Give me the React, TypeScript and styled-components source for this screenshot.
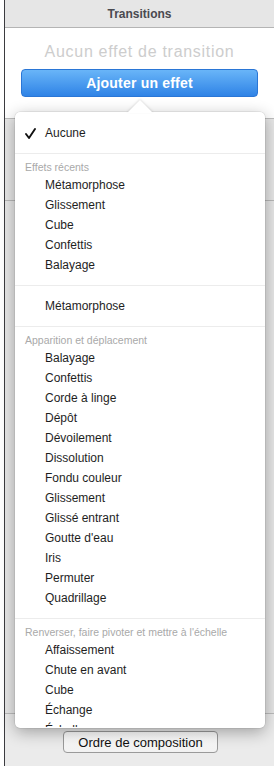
import React from "react";
import styled, { createGlobalStyle } from "styled-components";

type Section = {
  title?: string;
  items: string[];
};

// Menu content below the "Aucune" entry
const sections: Section[] = [
  {
    title: "Effets récents",
    items: ["Métamorphose", "Glissement", "Cube", "Confettis", "Balayage"],
  },
  { items: ["Métamorphose"] },
  {
    title: "Apparition et déplacement",
    items: [
      "Balayage",
      "Confettis",
      "Corde à linge",
      "Dépôt",
      "Dévoilement",
      "Dissolution",
      "Fondu couleur",
      "Glissement",
      "Glissé entrant",
      "Goutte d'eau",
      "Iris",
      "Permuter",
      "Quadrillage",
    ],
  },
  {
    title: "Renverser, faire pivoter et mettre à l'échelle",
    items: ["Affaissement", "Chute en avant", "Cube", "Échange", "Échelle"],
  },
];

const App: React.FC = () => {
  return (
    <>
      <GlobalStyle />
      <Page>
        <Gutter />
        <Panel>
          <Header>Transitions</Header>
          <Body>
            <Placeholder>Aucun effet de transition</Placeholder>
            <AddButton>Ajouter un effet</AddButton>
          </Body>
          <Middle>
            <MiddleRow />
          </Middle>
          <Footer>
            <OrderButton>Ordre de composition</OrderButton>
          </Footer>
        </Panel>

        <Popover>
          <Arrow width="26" height="13" viewBox="0 0 26 13">
            <path d="M0 13 L13 0 L26 13 Z" fill="#ffffff" />
          </Arrow>
          <MenuScroll>
            <MenuItem>
              <CheckSlot>
                <svg width="11" height="11" viewBox="0 0 11 11">
                  <path
                    d="M1 6 L4 10 L10 1"
                    fill="none"
                    stroke="#111"
                    strokeWidth="1.9"
                    strokeLinecap="round"
                    strokeLinejoin="round"
                  />
                </svg>
              </CheckSlot>
              Aucune
            </MenuItem>
            {sections.map((section, i) => (
              <React.Fragment key={i}>
                <Separator $plain={!section.title} />
                {section.title && <SectionTitle>{section.title}</SectionTitle>}
                {section.items.map((item, j) => (
                  <MenuItem key={j}>
                    <CheckSlot />
                    {item}
                  </MenuItem>
                ))}
              </React.Fragment>
            ))}
          </MenuScroll>
        </Popover>
      </Page>
    </>
  );
};

const GlobalStyle = createGlobalStyle`
  html, body {
    margin: 0;
    padding: 0;
    background: #ffffff;
  }
  body {
    font-family: "Liberation Sans", Arial, sans-serif;
  }
`;

const Page = styled.div`
  position: relative;
  display: flex;
  width: 274px;
  height: 766px;
  overflow: hidden;
`;

const Gutter = styled.div`
  width: 4px;
  background: #ffffff;
`;

const Panel = styled.div`
  flex: 1;
  display: flex;
  flex-direction: column;
  border-left: 1px solid #3b3b3f;
`;

const Header = styled.div`
  height: 27px;
  display: flex;
  align-items: center;
  justify-content: center;
  background: #e6e6e6;
  border-bottom: 1px solid #b4b4b4;
  font-size: 12px;
  font-weight: bold;
  color: #4a4a50;
`;

const Body = styled.div`
  height: 90px;
  display: flex;
  flex-direction: column;
  align-items: center;
  padding-top: 14px;
  box-sizing: border-box;
  background: #ffffff;
`;

const Placeholder = styled.div`
  height: 20px;
  line-height: 20px;
  font-size: 16px;
  letter-spacing: 0.7px;
  color: #cdcdcd;
`;

const AddButton = styled.button`
  margin-top: 7px;
  width: 237px;
  height: 28px;
  border: 1px solid #2a76d6;
  border-radius: 4px;
  background: linear-gradient(#69b5f8, #2f83e6);
  color: #ffffff;
  font-family: "Liberation Sans", Arial, sans-serif;
  font-size: 14px;
  font-weight: bold;
  letter-spacing: 0.2px;
  padding: 0;
`;

const Middle = styled.div`
  flex: 1;
  background: #e6e6e6;
  border-top: 1px solid #bdbdbd;
`;

const MiddleRow = styled.div`
  height: 81px;
  border-bottom: 1px solid #b8b8b8;
`;

const Footer = styled.div`
  height: 53px;
  box-sizing: border-box;
  display: flex;
  justify-content: center;
  padding-top: 17px;
  background: #ebebeb;
  border-top: 1px solid #bcbcbc;
`;

const OrderButton = styled.button`
  width: 155px;
  height: 22px;
  margin-left: 2px;
  border: 1px solid #9a9a9a;
  border-radius: 4px;
  background: linear-gradient(#ffffff, #f1f1f1);
  font-family: "Liberation Sans", Arial, sans-serif;
  font-size: 13px;
  color: #111111;
  padding: 0;
`;

const Popover = styled.div`
  position: absolute;
  left: 15px;
  top: 112px;
  width: 250px;
  height: 616px;
  background: #ffffff;
  border-radius: 5px;
  box-shadow: 0 4px 16px rgba(0, 0, 0, 0.32), 0 0 0 0.5px rgba(0, 0, 0, 0.12);
  padding-bottom: 1px;
  box-sizing: border-box;
  display: flex;
  flex-direction: column;
`;

const Arrow = styled.svg`
  position: absolute;
  left: 112px;
  top: -12px;
  filter: drop-shadow(0 -1px 1px rgba(0, 0, 0, 0.12));
`;

const MenuScroll = styled.div`
  flex: 1;
  overflow: hidden;
  padding-top: 11px;
`;

const MenuItem = styled.div`
  height: 20px;
  display: flex;
  align-items: center;
  font-size: 12px;
  color: #1e1e1e;
`;

const CheckSlot = styled.span`
  width: 30px;
  padding-left: 10px;
  display: flex;
  align-items: center;
  flex-shrink: 0;
  box-sizing: border-box;
`;

const Separator = styled.div<{ $plain?: boolean }>`
  height: ${({ $plain }) => ($plain ? "21px" : "20px")};
  display: flex;
  align-items: center;

  &::after {
    content: "";
    flex: 1;
    height: 1px;
    background: #ececec;
  }
`;

const SectionTitle = styled.div`
  height: 12px;
  line-height: 9px;
  padding-left: 10px;
  font-size: 10.5px;
  color: #a9a9a9;
  white-space: nowrap;
`;

export default App;
